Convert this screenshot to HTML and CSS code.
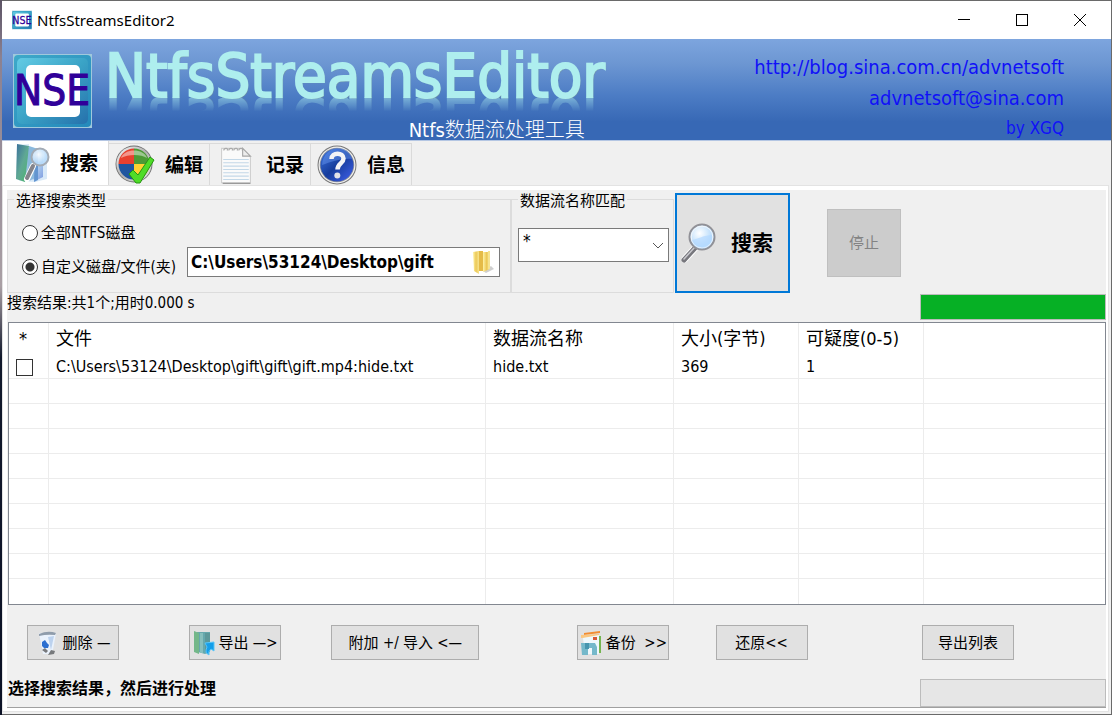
FILE: index.html
```html
<!DOCTYPE html>
<html lang="zh-CN">
<head>
<meta charset="utf-8">
<title>NtfsStreamsEditor2</title>
<link rel="stylesheet" href="styles.css">
</head>
<body>
<svg class="defs" aria-hidden="true">
  <defs>
    <linearGradient id="teal" x1="0" y1="0" x2="1" y2="1"><stop offset="0" stop-color="#62cbe4"/><stop offset=".5" stop-color="#3aa3c6"/><stop offset="1" stop-color="#2671ac"/></linearGradient>
    <linearGradient id="tealEdge" x1="0" y1="0" x2="1" y2="1"><stop offset="0" stop-color="#3ea9c9"/><stop offset="1" stop-color="#2489bb"/></linearGradient>
    <linearGradient id="greenBook" x1="0" y1="0" x2="1" y2="1"><stop offset="0" stop-color="#3a6f9c"/><stop offset=".5" stop-color="#5fa894"/><stop offset="1" stop-color="#4bb86a"/></linearGradient>
    <linearGradient id="blueBook" x1="0" y1="0" x2="1" y2="1"><stop offset="0" stop-color="#6fa9cd"/><stop offset=".6" stop-color="#b5d4f0"/><stop offset="1" stop-color="#7d9be0"/></linearGradient>
    <radialGradient id="glass" cx=".4" cy=".35"><stop offset="0" stop-color="#fff"/><stop offset="1" stop-color="#b9dcfb"/></radialGradient>
    <linearGradient id="metal" x1="0" y1="0" x2="1" y2="1"><stop offset="0" stop-color="#fafafa"/><stop offset=".5" stop-color="#b0b0b0"/><stop offset="1" stop-color="#eee"/></linearGradient>
    <linearGradient id="help" x1="0" y1="0" x2="1" y2="1"><stop offset="0" stop-color="#3f78e0"/><stop offset=".5" stop-color="#163c9c"/><stop offset="1" stop-color="#4262ee"/></linearGradient>
    <linearGradient id="gold" x1="0" x2="1"><stop offset="0" stop-color="#fff3a8"/><stop offset=".5" stop-color="#ecc958"/><stop offset="1" stop-color="#f7e48e"/></linearGradient>
    <symbol id="logo" viewBox="0 0 79 74">
      <rect width="79" height="74" fill="#9fc9dc"/>
      <rect x="1" y="1" width="77" height="72" rx="4" fill="url(#tealEdge)"/>
      <rect x="4" y="4" width="71" height="66" rx="5" fill="url(#teal)"/>
      <rect x="13" y="11" width="54" height="52" rx="5" fill="#fff"/>
      <text x="39" y="51" text-anchor="middle" class="logo-text">NSE</text>
    </symbol>
    <symbol id="lens" viewBox="0 0 36 40">
      <path d="M15 24 4 36" stroke="#fff" stroke-width="7" stroke-linecap="round"/>
      <path d="M14 25 3 37" stroke="#77777d" stroke-width="5" stroke-linecap="round"/>
      <path d="M13 25 3 36" stroke="#c9c9ce" stroke-width="1.5" stroke-linecap="round"/>
      <circle cx="21" cy="14" r="12.5" fill="url(#glass)" stroke="#919197" stroke-width="2"/>
      <circle cx="21" cy="14" r="10.8" fill="none" stroke="#f3f7fb"/>
      <path d="M11 17c6-1 12-5 20-5a10 10 0 0 1-20 5z" fill="#b4d8ff" opacity=".7"/>
    </symbol>
    <symbol id="find" viewBox="0 0 36 40">
      <path d="M2 2 14 1v3l18 3v29l-12 3L5 38 2 36z" fill="#d8e9f8"/>
      <path d="M10 5h18v29l-6 3-12-2z" fill="url(#blueBook)"/>
      <path d="M2 1 14 3 10 39 1 36z" fill="url(#greenBook)"/>
      <path d="M14 3 20 5v30l-8 4z" fill="#8bb9dd"/>
      <path d="m20 8 3 1v28l-4 2z" fill="#6395d0"/>
      <path d="M18 23 12 36" stroke="#fff" stroke-width="6" stroke-linecap="round"/>
      <path d="M18 23 12 35" stroke="#84848b" stroke-width="4" stroke-linecap="round"/>
      <circle cx="25" cy="14" r="8.5" fill="url(#glass)" fill-opacity=".9" stroke="#a3abb5" stroke-width="2"/>
    </symbol>
    <symbol id="edit" viewBox="0 0 40 40">
      <circle cx="19" cy="19" r="18.5" fill="#6f6f6f"/><circle cx="19" cy="19" r="17.6" fill="url(#metal)"/>
      <path d="M19 19V3.5A15.500 15.500 0 0 0 3.500 19z" fill="#e8402e"/>
      <path d="M19 19V3.500A15.500 15.500 0 0 1 34.500 19z" fill="#4c9a36"/>
      <path d="M19 19H3.500A15.500 15.500 0 0 0 19 34.500z" fill="#1f559f"/>
      <path d="M19 19h15.500A15.500 15.500 0 0 1 19 34.500z" fill="#ffd232"/>
      <path d="M6 13C9 3 29 3 32 13 26 9 13 9 6 13z" fill="#fff" opacity=".45"/>
      <path d="m14 29 4-4 5 5 12-18 4 3-14 23h-4z" fill="#4fdc28" stroke="#269510"/>
    </symbol>
    <symbol id="note" viewBox="0 0 30 36">
      <path d="M2 3h19l7 8v23H2z" fill="#fafafa" stroke="#d0d0d0"/>
      <path d="M21 3v7h7z" fill="#ededed" stroke="#a5a5a5"/>
      <path d="M3 34.500h25" stroke="#999"/>
      <path d="M3.500 13h23M3.500 16h23M3.500 19h23M3.500 22h23M3.500 25h23M3.500 28h23M3.500 31h23" stroke="#c3d8e8"/>
      <path d="M4 5q0-2 2-2t1 2M8.500 5q0-2 2-2t1 2M13 5q0-2 2-2t1 2M17.500 5q0-2 2-2t1 2" fill="none" stroke="#aaa"/>
    </symbol>
    <symbol id="info" viewBox="0 0 40 40">
      <circle cx="20" cy="20" r="19.500" fill="#777"/><circle cx="20" cy="20" r="18.500" fill="#f1f1f1"/><circle cx="20" cy="20" r="17.300" fill="#999"/>
      <circle cx="20" cy="20" r="16.500" fill="url(#help)"/>
      <path d="M5 20C6 0 32-2 35 14 25 13 14 17 5 20z" fill="#6a98f2" opacity=".45"/>
      <path d="M14.500 14c0-7 12-7 12-.5 0 5-6 5-6 11" fill="none" stroke="#f3f3f6" stroke-width="4.500"/>
      <circle cx="20.300" cy="30.500" r="3" fill="#e2e2e8"/>
    </symbol>
    <symbol id="folder" viewBox="0 0 24 26">
      <path d="m12 22 8-5 3 3-8 4z" fill="#bbb" opacity=".7"/>
      <path d="M7 2h5v20H7z" fill="#e5bb47"/><path d="M12 3h6l1 17-7 3z" fill="url(#gold)"/><path d="M17 2h2v18h-2z" fill="#f6e391"/>
      <path d="m2 3 6-1v23l-5-3z" fill="url(#gold)"/>
    </symbol>
    <symbol id="bin" viewBox="0 0 24 26">
      <path d="M3 3h17l-3 17-4 4H7z" fill="#eaf2fc"/>
      <path d="M3 4q9-4 17-1l-1 2q-8-1-16 1z" fill="#8f9cab"/>
      <path d="m12 7 6-1-3 14z" fill="#bcd2ee"/>
      <path d="m6 12 3-2 2 3 2 2-1 3H8l-2-2z" fill="#2c6fd0"/>
      <path d="M6 20l3-2 3 3-2 2zM15 20l4 1-1 3-6 1z" fill="#77797c"/>
    </symbol>
    <symbol id="export" viewBox="0 0 24 26">
      <path d="M5 2h13v20l-5 2-7-2z" fill="#65a8ad"/><path d="m2 1 5 2v21l-5-2z" fill="#73b789"/><path d="M8 3h3v20H8z" fill="#86bfbd"/><path d="M13 3h5v18h-5z" fill="#5c989a"/>
      <path d="m13 13 9-1v9l-3-2q-3 2-2 6-4-2-3-5l1-3z" fill="#159ee9" stroke="#55c5f9"/>
    </symbol>
    <symbol id="backup" viewBox="0 0 24 26">
      <path d="m5 3 16-2v2L5 5z" fill="#f28d32"/><path d="m2 5 18-1v3L2 8z" fill="#fbc780"/>
      <path d="M4 8 20 5v19H6z" fill="#eff8fc"/><path d="M20 6h2v17h-2z" fill="#74b551"/><path d="M14 7h4v3h-4z" fill="#d75a37"/>
      <path d="M2 13h14l2 4v8h-5v-7H9v7H3z" fill="#74b8ca"/><path d="M6 13h4v6H6z" fill="#4796af"/>
    </symbol>
  </defs>
</svg>
<div class="window">
  <header class="titlebar">
    <svg class="app-icon" aria-hidden="true"><use href="#logo"/></svg>
    <span class="app-name">NtfsStreamsEditor2</span>
    <div class="controls">
      <button type="button" aria-label="最小化"><svg viewBox="0 0 12 12"><path d="M0 5.500h12"/></svg></button>
      <button type="button" aria-label="最大化"><svg viewBox="0 0 12 12"><path d="M.5.5h11v11H.5z"/></svg></button>
      <button type="button" aria-label="关闭"><svg viewBox="0 0 12 12"><path d="m0 0 12 12M12 0 0 12"/></svg></button>
    </div>
  </header>
  <section class="banner">
    <svg class="logo" aria-hidden="true"><use href="#logo"/></svg>
    <div class="brand">
      <h1>NtfsStreamsEditor</h1>
      <p>Ntfs数据流处理工具</p>
    </div>
    <div class="contact">
      <a href="http://blog.sina.com.cn/advnetsoft">http://blog.sina.com.cn/advnetsoft</a>
      <a href="mailto:advnetsoft@sina.com">advnetsoft@sina.com</a>
      <span>by XGQ</span>
    </div>
  </section>
  <nav class="tabs">
    <button type="button" class="tab active"><svg viewBox="0 0 36 40"><use href="#find"/></svg>搜索</button>
    <button type="button" class="tab"><svg viewBox="0 0 40 40"><use href="#edit"/></svg>编辑</button>
    <button type="button" class="tab"><svg viewBox="0 0 30 36"><use href="#note"/></svg>记录</button>
    <button type="button" class="tab"><svg viewBox="0 0 40 40"><use href="#info"/></svg>信息</button>
  </nav>
  <main class="panel">
    <form class="search">
      <fieldset class="group type">
        <legend>选择搜索类型</legend>
        <label class="choice"><input type="radio" name="scope">全部NTFS磁盘</label>
        <div class="custom">
          <label class="choice"><input type="radio" name="scope" checked>自定义磁盘/文件(夹)</label>
          <div class="path">
            <input type="text" aria-label="路径" value="C:\Users\53124\Desktop\gift">
            <button type="button" aria-label="浏览"><svg viewBox="0 0 24 26"><use href="#folder"/></svg></button>
          </div>
        </div>
      </fieldset>
      <fieldset class="group match">
        <legend>数据流名称匹配</legend>
        <div class="combo">
          <select aria-label="数据流名称匹配"><option>*</option></select>
          <svg viewBox="0 0 12 7" aria-hidden="true"><path d="m1 1 5 5 5-5"/></svg>
        </div>
      </fieldset>
      <button type="button" class="go"><svg viewBox="0 0 36 40"><use href="#lens"/></svg>搜索</button>
      <button type="button" class="stop" disabled>停止</button>
    </form>
    <div class="result">
      <span>搜索结果:共1个;用时0.000 s</span>
      <div class="progress done"></div>
    </div>
    <div class="list">
      <table>
        <colgroup><col class="c-check"><col class="c-file"><col class="c-name"><col class="c-size"><col class="c-score"><col></colgroup>
        <thead><tr><th class="star">*</th><th>文件</th><th>数据流名称</th><th>大小(字节)</th><th>可疑度(0-5)</th><th></th></tr></thead>
        <tbody>
          <tr><td class="pick"><input type="checkbox" aria-label="选择 hide.txt"></td><td>C:\Users\53124\Desktop\gift\gift\gift.mp4:hide.txt</td><td>hide.txt</td><td>369</td><td>1</td><td></td></tr>
          <tr><td></td><td></td><td></td><td></td><td></td><td></td></tr>
          <tr><td></td><td></td><td></td><td></td><td></td><td></td></tr>
          <tr><td></td><td></td><td></td><td></td><td></td><td></td></tr>
          <tr><td></td><td></td><td></td><td></td><td></td><td></td></tr>
          <tr><td></td><td></td><td></td><td></td><td></td><td></td></tr>
          <tr><td></td><td></td><td></td><td></td><td></td><td></td></tr>
          <tr><td></td><td></td><td></td><td></td><td></td><td></td></tr>
          <tr><td></td><td></td><td></td><td></td><td></td><td></td></tr>
          <tr><td></td><td></td><td></td><td></td><td></td><td></td></tr>
        </tbody>
      </table>
    </div>
    <div class="actions">
      <button type="button"><svg viewBox="0 0 24 26"><use href="#bin"/></svg>删除 —</button><i></i>
      <button type="button"><svg viewBox="0 0 24 26"><use href="#export"/></svg>导出 —&gt;</button><i></i>
      <button type="button">附加 +/ 导入 &lt;—</button><i></i>
      <button type="button"><svg viewBox="0 0 24 26"><use href="#backup"/></svg>备份&nbsp; &gt;&gt;</button><i></i>
      <button type="button">还原&lt;&lt;</button><i></i>
      <button type="button">导出列表</button>
    </div>
    <footer class="status"><strong>选择搜索结果，然后进行处理</strong><div class="progress"></div></footer>
  </main>
</div>
</body>
</html>
```
FILE: styles.css
```css
* { box-sizing: border-box; }

body {
  margin: 0;
  background: linear-gradient(#5c5364, #8b8191 8%, #aaa0a5 40%, #11182c 50%, #0c1226);
  color: #000;
  font: 15px/20px "DejaVu Sans Condensed", "Noto Sans CJK SC", sans-serif;
}

button, input, select { margin: 0; color: inherit; font: inherit; border-radius: 0; }
button { padding: 0; }
svg { display: block; flex: none; }
.defs { position: absolute; width: 0; height: 0; }

.window {
  display: flex;
  flex-direction: column;
  min-height: 100vh;
  margin-left: 2px;
  border: solid #6a6a6a;
  border-width: 1px 1px 1px 0;
  background: #f0f0f0;
}

.titlebar { display: flex; align-items: center; height: 38px; padding: 0 2px 0 10px; background: #fff; }
.app-icon { width: 20px; height: 20px; }
.app-name { margin-left: 5px; font: 15px/20px "Noto Sans", sans-serif; }
.controls { display: flex; margin-left: auto; }
.controls button { display: grid; place-items: center; width: 58px; height: 38px; border: 0; background: none; }
.controls svg { width: 12px; height: 12px; fill: none; stroke: #000; shape-rendering: crispEdges; }

.banner {
  display: flex;
  height: 102px;
  padding-left: 11px;
  border-bottom: 1px solid #b4c6e3;
  background: linear-gradient(#7da5de, #6c96d2 25%, #4d7dc5 55%, #3768b5 82%, #3768b5);
}
.logo { width: 79px; height: 74px; margin-top: 15px; }
.logo-text { fill: #300099; stroke: #300099; stroke-width: 1px; font: 42px "DejaVu Sans Condensed", sans-serif; }
.brand { display: flex; flex-direction: column; margin-left: 13px; padding-top: 6px; }
.brand h1 {
  margin: 0;
  color: #aeeeee;
  font-size: 61px;
  font-weight: 400;
  line-height: 62px;
  -webkit-text-stroke: 2px #aeeeee;
  text-shadow: 1px 1px 1px #7a9a98;
  -webkit-box-reflect: below -19px linear-gradient(transparent 62%, rgba(0, 0, 0, .5) 86%);
}
.brand p { margin: 13px 20px 0; align-self: flex-end; color: #fff; font-size: 20px; font-weight: 300; line-height: 20px; }
.contact {
  display: flex;
  flex-direction: column;
  align-items: flex-end;
  margin-left: auto;
  padding: 13px 47px 0 0;
  color: #1010f8;
  font-size: 20px;
  line-height: 31px;
}
.contact a { color: inherit; text-decoration: none; }
.contact span { font-size: 17px; line-height: 29px; }

.tabs { display: flex; align-items: flex-end; height: 45px; padding-left: 1px; }
.tab {
  display: flex;
  align-items: center;
  justify-content: space-between;
  width: 101px;
  height: 43px;
  padding: 0 6px;
  border: solid #dadada;
  border-width: 1px 1px 0 0;
  background: #f0f0f0;
  font-size: 19px;
  font-weight: 700;
}
.tab svg { width: 40px; height: 40px; }
.tab.active { width: 106px; height: 45px; padding: 0 10px 2px 12px; border-width: 0 1px 0 0; background: #fff; }
.tab.active svg { width: 36px; }

.panel {
  flex: 1;
  display: flex;
  flex-direction: column;
  margin: 0 3px 3px 1px;
  border: solid #fff;
  border-width: 4px 2px 3px 4px;
  outline: 1px solid #e3e3e3;
  background: #f0f0f0;
}

.search { display: flex; height: 103px; padding-top: 2px; }
.group { position: relative; margin: 7px 0 0; padding: 0; border: 1px solid #dcdcdc; height: 94px; min-width: 0; }
.group legend { position: absolute; top: -9px; left: 6px; padding: 0 2px; background: #f0f0f0; line-height: 20px; }
.type { width: 504px; padding: 23px 10px 0 14px; }
.choice { display: flex; align-items: center; gap: 3px; white-space: nowrap; }
.choice input { appearance: none; width: 16px; height: 16px; border: 1px solid #333; border-radius: 50%; background: #fff; }
.choice input:checked { background: radial-gradient(#333 4px, #fff 5px); }
.custom { display: flex; align-items: flex-end; justify-content: space-between; margin-top: 4px; }
.path { display: flex; width: 313px; height: 30px; border: 1px solid #7a7a7a; background: #fff; }
.path input { flex: 1; min-width: 0; padding: 0 3px; border: 0; outline: 0; font-size: 17px; font-weight: 700; }
.path button { width: 28px; border: 0; background: none; }
.path svg { width: 24px; height: 26px; }
.match { width: 163px; padding: 28px 4px 0 6px; }
.combo { position: relative; }
.combo select { appearance: none; display: block; width: 100%; height: 34px; padding: 0 4px 8px; border: 1px solid #7a7a7a; background: #fff; font-size: 17px; }
.combo svg { position: absolute; right: 5px; top: 14px; width: 12px; height: 7px; fill: none; stroke: #555; pointer-events: none; }
.go {
  display: flex;
  align-items: center;
  gap: 14px;
  width: 115px;
  height: 100px;
  margin: 1px 0 0 1px;
  padding-left: 4px;
  border: 2px solid #0078d7;
  background: #e1e1e1;
  font-size: 21px;
  font-weight: 700;
}
.go svg { width: 36px; height: 40px; }
.stop { width: 74px; height: 68px; margin: 17px 0 0 37px; border: 1px solid #bfbfbf; background: #ccc; color: #838383; }

.result { display: flex; justify-content: space-between; height: 29px; }
.result .progress { height: 26px; margin-top: 1px; }
.progress { width: 186px; border: 1px solid #bcbcbc; background: #e6e6e6; }
.progress.done { background: #06b025; }

.list { flex: 1; margin-left: 1px; border: 1px solid #828790; background: #fff; }
table { width: 100%; border-collapse: separate; border-spacing: 0; table-layout: fixed; }
.c-check { width: 40px; }
.c-file { width: 437px; }
.c-name { width: 188px; }
.c-size, .c-score { width: 125px; }
th, td { padding: 0 7px; text-align: left; font-weight: 400; white-space: nowrap; border-right: 1px solid #ececec; }
th { height: 31px; font-size: 18px; }
td { height: 25px; padding-top: 2px; border-bottom: 1px solid #ececec; font-size: 16px; }
th:last-child, td:last-child { border-right: 0; }
tr:last-child td { border-bottom: 0; }
th.star { padding-left: 10px; }
.pick input { appearance: none; display: block; width: 17px; height: 17px; border: 1px solid #333; background: #fff; }

.actions {
  display: grid;
  grid-template-columns: 92px 70fr 92px 51fr 148px 98fr 92px 47fr 92px 115fr 92px;
  padding: 20px 92px 0 20px;
}
.actions button {
  display: flex;
  align-items: center;
  justify-content: center;
  gap: 3px;
  height: 35px;
  border: 1px solid #adadad;
  background: #e1e1e1;
  white-space: nowrap;
}
.actions svg { width: 24px; height: 26px; }

.status { display: flex; justify-content: space-between; height: 48px; padding-top: 19px; border-bottom: 1px solid #a0a0a0; }
.status strong { padding-left: 1px; font-size: 16px; }
```
